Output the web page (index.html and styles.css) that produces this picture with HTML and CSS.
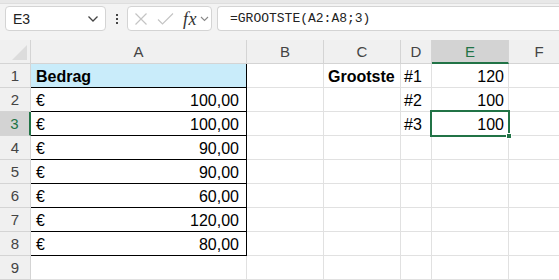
FILE: index.html
```html
<!DOCTYPE html>
<html>
<head>
<meta charset="utf-8">
<link rel="stylesheet" href="styles.css">
</head>
<body>
<div class="app">
  <div class="topstrip"></div>
  <div class="fbar">
    <div class="namebox">
      <span class="ref">E3</span>
      <svg class="chev" width="12" height="8" viewBox="0 0 12 8"><polyline points="1.5,1.5 6,6 10.5,1.5" fill="none" stroke="#444" stroke-width="1.3"/></svg>
    </div>
    <div class="dots"><i></i><i></i><i></i></div>
    <div class="fxbox">
      <svg class="ico" width="14" height="14" viewBox="0 0 14 14"><path d="M1.5 1.5 L12.5 12.5 M12.5 1.5 L1.5 12.5" stroke="#c4c4c4" stroke-width="1.2" fill="none"/></svg>
      <svg class="ico chk" width="17" height="14" viewBox="0 0 17 14"><path d="M1 7.5 L5.5 12 L16 1.5" stroke="#c4c4c4" stroke-width="1.2" fill="none"/></svg>
      <span class="fx">fx</span>
      <svg class="chev2" width="9" height="6" viewBox="0 0 9 6"><polyline points="1,1 4.5,4.5 8,1" fill="none" stroke="#888" stroke-width="1.1"/></svg>
    </div>
    <div class="formula">=GROOTSTE(A2:A8;3)</div>
  </div>
  <div class="sheet">
    <div class="grid">
      <div class="corner"><span class="tri"></span></div>
      <div class="ch">A</div>
      <div class="ch">B</div>
      <div class="ch">C</div>
      <div class="ch">D</div>
      <div class="ch sel">E</div>
      <div class="ch last">F</div>

      <div class="rh">1</div>
      <div class="c ta head">Bedrag</div>
      <div class="c"></div>
      <div class="c bold">Grootste</div>
      <div class="c">#1</div>
      <div class="c num">120</div>
      <div class="c"></div>

      <div class="rh">2</div>
      <div class="c ta acc"><span>€</span><span>100,00</span></div>
      <div class="c"></div>
      <div class="c"></div>
      <div class="c">#2</div>
      <div class="c num">100</div>
      <div class="c"></div>

      <div class="rh selr">3</div>
      <div class="c ta acc"><span>€</span><span>100,00</span></div>
      <div class="c"></div>
      <div class="c"></div>
      <div class="c">#3</div>
      <div class="c num">100</div>
      <div class="c"></div>

      <div class="rh">4</div>
      <div class="c ta acc"><span>€</span><span>90,00</span></div>
      <div class="c"></div><div class="c"></div><div class="c"></div><div class="c"></div><div class="c"></div>

      <div class="rh">5</div>
      <div class="c ta acc"><span>€</span><span>90,00</span></div>
      <div class="c"></div><div class="c"></div><div class="c"></div><div class="c"></div><div class="c"></div>

      <div class="rh">6</div>
      <div class="c ta acc"><span>€</span><span>60,00</span></div>
      <div class="c"></div><div class="c"></div><div class="c"></div><div class="c"></div><div class="c"></div>

      <div class="rh">7</div>
      <div class="c ta acc"><span>€</span><span>120,00</span></div>
      <div class="c"></div><div class="c"></div><div class="c"></div><div class="c"></div><div class="c"></div>

      <div class="rh">8</div>
      <div class="c ta acc"><span>€</span><span>80,00</span></div>
      <div class="c"></div><div class="c"></div><div class="c"></div><div class="c"></div><div class="c"></div>

      <div class="rh">9</div>
      <div class="c"></div>
      <div class="c"></div><div class="c"></div><div class="c"></div><div class="c"></div><div class="c"></div>
    </div>
    <div class="selbox"><span class="handle"></span></div>
  </div>
</div>
</body>
</html>
```

FILE: styles.css
```css
* { box-sizing: border-box; }
html, body { margin: 0; padding: 0; }
body {
  width: 559px;
  height: 280px;
  overflow: hidden;
  background: #f3f3f3;
  font-family: "Liberation Sans", Arial, sans-serif;
}
.app { width: 559px; height: 280px; overflow: hidden; }
.topstrip {
  height: 4px;
  background: #e8e8e8;
  border-bottom: 1px solid #dedede;
}
.fbar {
  height: 36px;
  padding-top: 2px;
  display: flex;
  align-items: flex-start;
}
.namebox {
  margin-left: 5px;
  width: 101px;
  height: 25px;
  background: #fff;
  border: 1px solid #d4d4d4;
  border-radius: 4px;
  display: flex;
  align-items: center;
  justify-content: space-between;
  padding: 0 6px 0 7px;
}
.ref { font-size: 14px; color: #222; }
.chev { display: block; margin-top: 1px; }
.dots {
  width: 21px;
  height: 25px;
  display: flex;
  flex-direction: column;
  align-items: center;
  justify-content: center;
  gap: 2px;
}
.dots i { display: block; width: 2px; height: 2px; background: #444; }
.fxbox {
  width: 85px;
  height: 25px;
  background: #fff;
  border: 1px solid #d4d4d4;
  border-radius: 4px;
  display: flex;
  align-items: center;
  padding-left: 6px;
}
.ico { display: block; }
.chk { margin-left: 9px; }
.fx {
  font-family: "Liberation Serif", "DejaVu Serif", serif;
  font-style: italic;
  font-size: 18px;
  color: #333;
  margin-left: 9px;
  line-height: 1;
  letter-spacing: 0.5px;
}
.chev2 { display: block; margin-left: 3px; }
.formula {
  margin-left: 5px;
  flex: 1;
  height: 25px;
  background: #fff;
  border: 1px solid #d4d4d4;
  border-right: none;
  border-radius: 4px 0 0 4px;
  font-family: "Liberation Mono", "DejaVu Sans Mono", monospace;
  font-size: 13px;
  color: #222;
  line-height: 23px;
  padding-left: 12px;
}
.sheet { position: relative; }
.grid {
  display: grid;
  grid-template-columns: 31px 216px 77px 77px 31px 77px 60px;
  grid-auto-rows: 24px;
  background: #fff;
}
.corner, .ch, .rh {
  background: #f0f0f0;
  border-right: 1px solid #d4d4d4;
  border-bottom: 1px solid #d4d4d4;
  color: #444;
  font-size: 15px;
}
.corner { position: relative; }
.tri {
  position: absolute;
  right: 3px;
  bottom: 3px;
  width: 0; height: 0;
  border-left: 15px solid transparent;
  border-bottom: 15px solid #dcdcdc;
}
.ch { text-align: center; line-height: 23px; }
.ch.sel { background: #d3d3d3; border-bottom: 2px solid #217346; color: #217346; }
.ch.last { border-right: none; }
.rh { text-align: center; line-height: 24px; }
.rh.selr { background: #d3d3d3; border-right: 2px solid #217346; color: #217346; }
.c {
  border-right: 1px solid #e1e1e1;
  border-bottom: 1px solid #e1e1e1;
  font-size: 16px;
  color: #000;
  line-height: 25px;
  padding: 0 4px 0 3px;
  white-space: nowrap;
  overflow: hidden;
}
.c.ta { border-right-color: #000; border-bottom-color: #000; padding: 0 7px 0 5px; }
.c.head { background: #c9ecfa; font-weight: bold; }
.c.bold { font-weight: bold; padding-left: 4px; }
.c.acc { display: flex; justify-content: space-between; }
.c.num { text-align: right; }
.selbox {
  position: absolute;
  left: 430px;
  top: 70px;
  width: 80px;
  height: 27px;
  border: 2px solid #217346;
  pointer-events: none;
}
.handle {
  position: absolute;
  right: -4px;
  bottom: -4px;
  width: 6px;
  height: 6px;
  background: #217346;
  border: 1px solid #fff;
}
```
